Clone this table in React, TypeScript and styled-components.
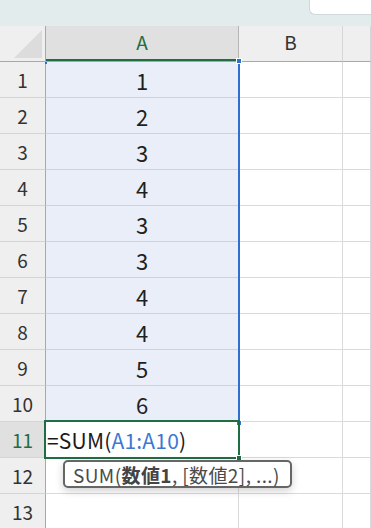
import styled, { createGlobalStyle } from "styled-components"

const GlobalStyle = createGlobalStyle`
  html, body {
    margin: 0;
    padding: 0;
    background: #ffffff;
    overflow: hidden;
  }
  body {
    font-family: "Noto Sans CJK JP", "Noto Sans", sans-serif;
  }
`

const values = [1, 2, 3, 4, 3, 3, 4, 4, 5, 6]
const rows = Array.from({ length: 13 }, (_, i) => i + 1)
const ACTIVE_ROW = 11

function App() {
  return (
    <Page>
      <GlobalStyle />
      <TopBand>
        <SearchBox />
      </TopBand>
      <Sheet>
        <Corner>
          <CornerTriangle />
        </Corner>
        <ColHeader $col={2} $active>
          A
        </ColHeader>
        <ColHeader $col={3}>B</ColHeader>
        <ColHeader $col={4} />

        {rows.map((r) => (
          <Row key={r} r={r} />
        ))}

        <RangeHighlight>
          <Handle $pos="tl" />
          <Handle $pos="tr" />
          <Handle $pos="br" />
        </RangeHighlight>

        <ActiveCell>
          <Formula>
            =SUM(<Ref>A1:A10</Ref>)
          </Formula>
          <FillHandle />
        </ActiveCell>

        <Tooltip>
          SUM(<b>数値1</b>, [数値2], ...)
        </Tooltip>
      </Sheet>
    </Page>
  )
}

function Row({ r }: { r: number }) {
  const inRange = r <= 10
  const gridRow = r + 1
  return (
    <>
      <RowHeader $row={gridRow} $active={r === ACTIVE_ROW}>
        {r}
      </RowHeader>
      <Cell $row={gridRow} $col={2} $range={inRange}>
        {inRange ? values[r - 1] : ""}
      </Cell>
      <Cell $row={gridRow} $col={3} />
      <Cell $row={gridRow} $col={4} />
    </>
  )
}

const Page = styled.div`
  width: 371px;
  height: 528px;
  overflow: hidden;
`

const TopBand = styled.div`
  height: 26px;
  background: #e2eced;
  display: flex;
  justify-content: flex-end;
  align-items: flex-start;
`

const SearchBox = styled.div`
  width: 61px;
  height: 14px;
  background: #ffffff;
  border-left: 1px solid #cfd8da;
  border-bottom: 1px solid #cfd8da;
  border-bottom-left-radius: 6px;
`

const Sheet = styled.div`
  display: grid;
  grid-template-columns: 46px 193px 104px 1fr;
  grid-auto-rows: 36px;
  position: relative;
`

const Corner = styled.div`
  grid-row: 1;
  grid-column: 1;
  background: #efefef;
  border-right: 1px solid #a8a8a8;
  border-bottom: 1px solid #a8a8a8;
  box-sizing: border-box;
  display: flex;
  align-items: flex-end;
  justify-content: flex-end;
  padding: 0 3px 3px 0;
`

const CornerTriangle = styled.div`
  width: 28px;
  height: 28px;
  background: #dcdcdc;
  clip-path: polygon(100% 0, 100% 100%, 0 100%);
`

const ColHeader = styled.div<{ $col: number; $active?: boolean }>`
  grid-row: 1;
  grid-column: ${({ $col }) => $col};
  box-sizing: border-box;
  background: ${({ $active }) => ($active ? "#e0e0e0" : "#efefef")};
  color: ${({ $active }) => ($active ? "#1f6e43" : "#333333")};
  border-right: 1px solid ${({ $active }) => ($active ? "#b4b4b4" : "#d6d6d6")};
  border-bottom: 1px solid #a8a8a8;
  box-shadow: ${({ $active }) => ($active ? "inset 0 -2px 0 #1f6e43" : "none")};
  display: flex;
  align-items: center;
  justify-content: center;
  font-size: 19px;
  padding-bottom: 4px;
`

const RowHeader = styled.div<{ $row: number; $active?: boolean }>`
  grid-row: ${({ $row }) => $row};
  grid-column: 1;
  box-sizing: border-box;
  background: ${({ $active }) => ($active ? "#e0e0e0" : "#efefef")};
  color: ${({ $active }) => ($active ? "#1f6e43" : "#333333")};
  border-right: 1px solid #a8a8a8;
  border-bottom: 1px solid #d4d4d4;
  display: flex;
  align-items: center;
  justify-content: center;
  font-size: 19px;
`

const Cell = styled.div<{ $row: number; $col: number; $range?: boolean }>`
  grid-row: ${({ $row }) => $row};
  grid-column: ${({ $col }) => $col};
  box-sizing: border-box;
  background: ${({ $range }) => ($range ? "#e9eef8" : "#ffffff")};
  border-right: 1px solid #dadada;
  border-bottom: 1px solid ${({ $range }) => ($range ? "#cdd2db" : "#dadada")};
  display: flex;
  align-items: center;
  justify-content: center;
  font-size: 22px;
  color: #1f1f1f;
`

const RangeHighlight = styled.div`
  grid-column: 2;
  grid-row: 2 / 12;
  position: relative;
  z-index: 2;
  margin-right: -1px;
  border-right: 2px solid #2f6fd0;
  pointer-events: none;
`

const Handle = styled.div<{ $pos: "tl" | "tr" | "br" }>`
  position: absolute;
  background: #2f6fd0;
  border: 1px solid #ffffff;
  width: ${({ $pos }) => ($pos === "tl" ? "2px" : "4px")};
  height: ${({ $pos }) => ($pos === "tl" ? "2px" : "4px")};
  left: ${({ $pos }) => ($pos === "tl" ? "-1px" : "auto")};
  right: ${({ $pos }) => ($pos === "tl" ? "auto" : "-4px")};
  top: ${({ $pos }) => ($pos === "br" ? "auto" : "-4px")};
  bottom: ${({ $pos }) => ($pos === "br" ? "-4px" : "auto")};
  ${({ $pos }) => ($pos === "tl" ? "top: 0; border: none;" : "")}
`

const ActiveCell = styled.div`
  grid-column: 2;
  grid-row: 12;
  position: relative;
  z-index: 3;
  margin: -2px -1px -1px -2px;
  border: 2px solid #1f6e43;
  display: flex;
  align-items: center;
  padding-left: 1px;
`

const Formula = styled.span`
  font-size: 21px;
  color: #1a1a1a;
  white-space: nowrap;
  letter-spacing: 0.2px;
`

const Ref = styled.span`
  color: #3b78d4;
`

const FillHandle = styled.div`
  position: absolute;
  right: -4px;
  bottom: -4px;
  width: 4px;
  height: 4px;
  background: #1f6e43;
  border: 1px solid #ffffff;
`

const Tooltip = styled.div`
  grid-column: 2 / 4;
  grid-row: 13;
  justify-self: start;
  align-self: start;
  position: relative;
  z-index: 4;
  margin: 2px 0 0 17px;
  height: 28px;
  box-sizing: border-box;
  padding: 0 10px 0 8px;
  display: flex;
  align-items: center;
  white-space: nowrap;
  background: #ffffff;
  border: 2px solid #666666;
  border-radius: 5px;
  box-shadow: 0 3px 8px rgba(0, 0, 0, 0.18);
  font-size: 19px;
  letter-spacing: 0.4px;
  color: #4a4a4a;

  b {
    font-weight: 700;
    color: #444444;
  }
`

export default App
